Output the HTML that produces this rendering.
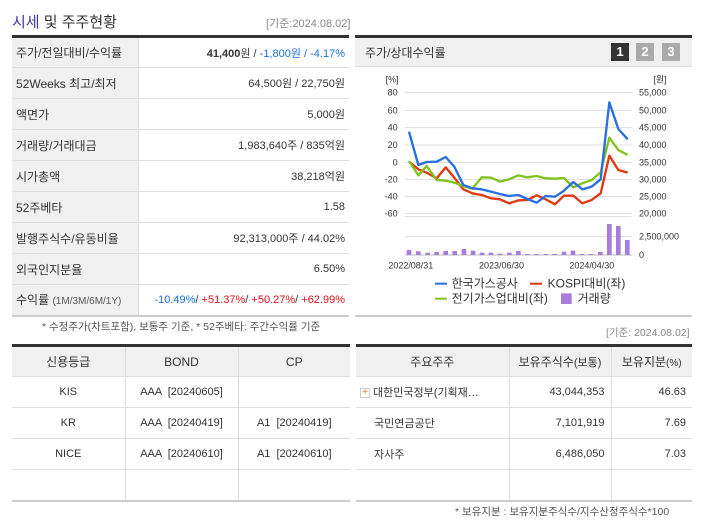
<!DOCTYPE html>
<html><head><meta charset="utf-8"><style>
*{margin:0;padding:0;box-sizing:border-box}
body{width:702px;height:525px;background:#fff;font-family:"Liberation Sans","Noto Sans CJK KR",sans-serif;color:#333;position:relative;overflow:hidden;font-size:11px}
.abs{position:absolute}
table{border-collapse:collapse;position:absolute;table-layout:fixed}
#t1{left:12px;top:35px;width:337px;border-top:3px solid #333;border-bottom:2px solid #ccc}
#t1 td{height:31px;border-bottom:1px solid #ddd;font-size:11px;padding:0 4px}
#t1 td.l{background:#f0f0f0;border-right:1px solid #ddd;width:126px;font-size:12px;color:#333}
#t1 td.r{text-align:right;color:#333}
.bl{color:#1a6fe0}.rd{color:#e0101a}
.t2{top:344px;border-top:3px solid #333;border-bottom:2px solid #ccc}
.t2 th{height:31px;background:#f0f0f0;font-weight:normal;font-size:12px;border-right:1px solid #ddd;border-bottom:1px solid #ddd}
.t2 td{height:31px;border-bottom:1px solid #ddd;border-right:1px solid #ddd;font-size:11px;text-align:center}
.t2 th:last-child,.t2 td:last-child{border-right:none}
</style></head><body>
<div class="abs" style="left:12px;top:11px;font-size:15px"><span style="color:#3b3b9e">시세</span> 및 주주현황</div>
<div class="abs" style="left:266px;top:15px;font-size:11px;color:#888">[기준:2024.08.02]</div>
<table id="t1">
<tr><td class="l">주가/전일대비/수익률</td><td class="r"><b>41,400</b>원 / <span class="bl">-1,800원 / -4.17%</span></td></tr>
<tr><td class="l">52Weeks 최고/최저</td><td class="r">64,500원 / 22,750원</td></tr>
<tr><td class="l">액면가</td><td class="r">5,000원</td></tr>
<tr><td class="l">거래량/거래대금</td><td class="r">1,983,640주 / 835억원</td></tr>
<tr><td class="l">시가총액</td><td class="r">38,218억원</td></tr>
<tr><td class="l">52주베타</td><td class="r">1.58</td></tr>
<tr><td class="l">발행주식수/유동비율</td><td class="r">92,313,000주 / 44.02%</td></tr>
<tr><td class="l">외국인지분율</td><td class="r">6.50%</td></tr>
<tr><td class="l">수익률 <span style="font-size:10px;color:#555">(1M/3M/6M/1Y)</span></td><td class="r"><span class="bl">-10.49%</span>/ <span class="rd">+51.37%</span>/ <span class="rd">+50.27%</span>/ <span class="rd">+62.99%</span></td></tr>
</table>
<div class="abs" style="left:42px;top:319px;font-size:10.5px;color:#555">* 수정주가(차트포함), 보통주 기준, * 52주베타: 주간수익률 기준</div>
<div class="abs" style="left:606px;top:325px;font-size:10.5px;color:#888">[기준: 2024.08.02]</div>

<div class="abs" style="left:355px;top:35px;width:337px;height:282px;border-top:3px solid #333;border-bottom:2px solid #ccc"></div>
<div class="abs" style="left:355px;top:38px;width:337px;height:29px;background:#f0f0f0;border-bottom:1px solid #ddd"></div>
<div class="abs" style="left:365px;top:44px;font-size:12px">주가/상대수익률</div>
<div class="abs" style="left:611px;top:43px;width:18px;height:18px;background:#333;color:#fff;font-weight:bold;text-align:center;line-height:18px;font-size:13px">1</div>
<div class="abs" style="left:636px;top:43px;width:18px;height:18px;background:#aaa;color:#fff;font-weight:bold;text-align:center;line-height:18px;font-size:13px">2</div>
<div class="abs" style="left:662px;top:43px;width:18px;height:18px;background:#aaa;color:#fff;font-weight:bold;text-align:center;line-height:18px;font-size:13px">3</div>

<svg class="abs" style="left:0;top:0" width="702" height="525">
<g transform="translate(355,30) scale(0.33333)">
<g stroke="#ddd" stroke-width="3">
<line x1="150" x2="830" y1="187" y2="187"/><line x1="150" x2="830" y1="241" y2="241"/><line x1="150" x2="830" y1="293" y2="293"/><line x1="150" x2="830" y1="345" y2="345"/><line x1="150" x2="830" y1="397" y2="397"/><line x1="150" x2="830" y1="448" y2="448"/><line x1="150" x2="830" y1="499" y2="499"/><line x1="150" x2="830" y1="551" y2="551"/><line x1="150" x2="830" y1="560" y2="560"/><line x1="150" x2="830" y1="620" y2="620"/>
</g>
<line x1="150" x2="830" y1="675" y2="675" stroke="#bbb" stroke-width="3"/>
<g fill="#a77ddc">
<rect x="155" y="660" width="14" height="15"/><rect x="183" y="664" width="14" height="11"/><rect x="211" y="668" width="14" height="7"/><rect x="238" y="666" width="14" height="9"/><rect x="265" y="663" width="14" height="12"/><rect x="292" y="663" width="14" height="12"/><rect x="320" y="657" width="14" height="18"/><rect x="347" y="662" width="14" height="13"/><rect x="374" y="668" width="14" height="7"/><rect x="401" y="668" width="14" height="7"/><rect x="428" y="671" width="14" height="4"/><rect x="456" y="668" width="14" height="7"/><rect x="483" y="663" width="14" height="12"/><rect x="510" y="672" width="14" height="3"/><rect x="537" y="672" width="14" height="3"/><rect x="565" y="672" width="14" height="3"/><rect x="592" y="672" width="14" height="3"/><rect x="620" y="665" width="14" height="10"/><rect x="647" y="662" width="14" height="13"/><rect x="674" y="672" width="14" height="3"/><rect x="701" y="672" width="14" height="3"/><rect x="729" y="666" width="14" height="9"/><rect x="756" y="582" width="14" height="93"/><rect x="783" y="588" width="14" height="87"/><rect x="810" y="630" width="14" height="45"/>
</g>
<g fill="none" stroke-width="7" stroke-linejoin="round">
<polyline stroke="#e03a10" points="162,395 190,418 215,428 245,445 272,412 298,443 325,478 352,490 380,495 408,505 435,508 462,520 490,511 517,510 545,496 572,508 600,523 627,497 655,497 682,520 710,510 737,490 763,377 790,420 818,428"/>
<polyline stroke="#7fc31c" points="162,393 190,436 215,408 245,450 272,452 298,458 325,468 352,476 380,442 408,443 435,455 462,448 490,436 517,442 545,438 572,445 600,446 627,444 655,472 682,460 710,450 737,427 763,323 790,360 818,375"/>
<polyline stroke="#2a6fe0" points="162,305 190,405 215,396 245,395 272,381 298,410 325,465 352,475 380,478 408,485 435,492 462,498 490,495 517,507 545,518 572,498 600,500 627,482 655,456 682,478 710,470 737,448 763,217 790,297 818,328"/>
</g>
<g font-size="27" fill="#333" font-family="Liberation Sans, sans-serif">
<text x="92" y="158">[%]</text><text x="895" y="158">[원]</text>
<g text-anchor="end"><text x="128" y="196">80</text><text x="128" y="250">60</text><text x="128" y="302">40</text><text x="128" y="354">20</text><text x="128" y="406">0</text><text x="128" y="457">-20</text><text x="128" y="508">-40</text><text x="128" y="560">-60</text></g>
<text x="852" y="196">55,000</text><text x="852" y="250">50,000</text><text x="852" y="302">45,000</text><text x="852" y="354">40,000</text><text x="852" y="406">35,000</text><text x="852" y="457">30,000</text><text x="852" y="508">25,000</text><text x="852" y="560">20,000</text><text x="852" y="628">2,500,000</text><text x="852" y="684">0</text>
<text x="100" y="715">2022/08/31</text><text x="372" y="715">2023/06/30</text><text x="643" y="715">2024/04/30</text>
</g>
<g font-size="36" fill="#333">
<rect x="240" y="758" width="36" height="6" fill="#2a6fe0"/><text x="290" y="772">한국가스공사</text>
<rect x="525" y="758" width="36" height="6" fill="#e03a10"/><text x="578" y="772">KOSPI대비(좌)</text>
<rect x="240" y="803" width="36" height="6" fill="#7fc31c"/><text x="290" y="817">전기가스업대비(좌)</text>
<rect x="618" y="790" width="32" height="32" fill="#a77ddc"/><text x="668" y="817">거래량</text>
</g>
</g>
</svg>

<table class="t2" style="left:12px;width:338px">
<tr><th style="width:113px">신용등급</th><th style="width:113px">BOND</th><th>CP</th></tr>
<tr><td>KIS</td><td>AAA &nbsp;[20240605]</td><td></td></tr>
<tr><td>KR</td><td>AAA &nbsp;[20240419]</td><td>A1 &nbsp;[20240419]</td></tr>
<tr><td>NICE</td><td>AAA &nbsp;[20240610]</td><td>A1 &nbsp;[20240610]</td></tr>
<tr><td></td><td></td><td></td></tr>
</table>
<table class="t2" style="left:356px;width:336px">
<tr><th style="width:153px">주요주주</th><th style="width:102px">보유주식수<span style="font-size:11px">(보통)</span></th><th>보유지분<span style="font-size:10px">(%)</span></th></tr>
<tr><td style="text-align:left;padding-left:4px"><span style="display:inline-block;width:10px;height:10px;border:1px solid #ccc;color:#f07020;font-size:10px;line-height:8px;text-align:center;vertical-align:middle">+</span> 대한민국정부(기획재…</td><td style="text-align:right;padding-right:6px">43,044,353</td><td style="text-align:right;padding-right:6px">46.63</td></tr>
<tr><td style="text-align:left;padding-left:18px">국민연금공단</td><td style="text-align:right;padding-right:6px">7,101,919</td><td style="text-align:right;padding-right:6px">7.69</td></tr>
<tr><td style="text-align:left;padding-left:18px">자사주</td><td style="text-align:right;padding-right:6px">6,486,050</td><td style="text-align:right;padding-right:6px">7.03</td></tr>
<tr><td></td><td></td><td></td></tr>
</table>
<div class="abs" style="left:455px;top:504px;font-size:10.5px;color:#555">* 보유지분 : 보유지분주식수/지수산정주식수*100</div>
</body></html>
